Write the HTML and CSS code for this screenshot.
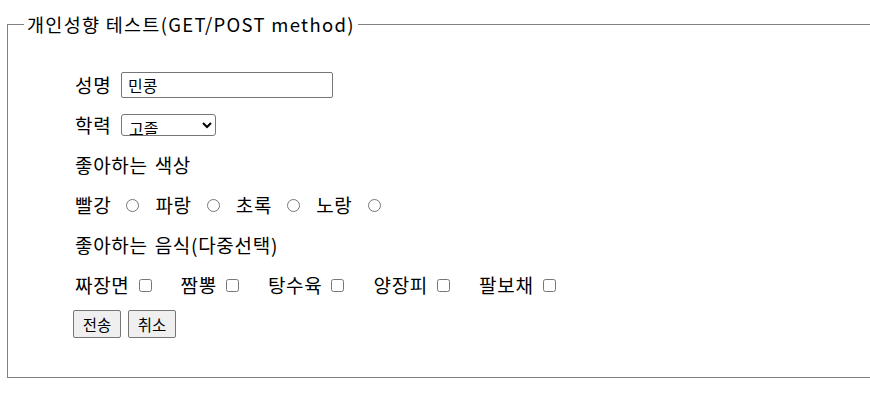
FILE: index.html
```
<!DOCTYPE html>
<html>
<head>
	<title>개인성향 테스트</title>
	<link rel="stylesheet" href="styles.css">
</head>
<body>
	<form class="survey">
		<fieldset class="survey_box">
			<legend>개인성향 테스트(GET/POST method)</legend>
			<ul class="survey_list">
				<li class="row">
					<label>성명</label>
					<input type="text" class="name_input" value="민콩">
				</li>
				<li class="row">
					<label>학력</label>
					<select class="edu_select">
						<option>고졸</option>
						<option>대졸</option>
						<option>대학원졸</option>
					</select>
				</li>
				<li class="row">좋아하는 색상</li>
				<li class="row colors">
					<span class="opt">빨강 <input type="radio" name="color"></span>
					<span class="opt">파랑 <input type="radio" name="color"></span>
					<span class="opt">초록 <input type="radio" name="color"></span>
					<span class="opt">노랑 <input type="radio" name="color"></span>
				</li>
				<li class="row">좋아하는 음식(다중선택)</li>
				<li class="row food">
					<span class="opt">짜장면 <input type="checkbox"></span>
					<span class="opt">짬뽕 <input type="checkbox"></span>
					<span class="opt">탕수육 <input type="checkbox"></span>
					<span class="opt">양장피 <input type="checkbox"></span>
					<span class="opt">팔보채 <input type="checkbox"></span>
				</li>
				<li class="row btns">
					<button type="submit">전송</button>
					<button type="reset">취소</button>
				</li>
			</ul>
		</fieldset>
	</form>
</body>
</html>
```

FILE: styles.css
```
* {
	margin: 0;
	padding: 0;
	box-sizing: border-box;
}

body {
	margin: 0;
	font-family: "Noto Sans CJK KR", "Noto Sans", sans-serif;
	font-size: 19px;
	color: #000;
	background: #fff;
}

.survey {
	padding: 12px 0 0 7px;
	width: 870px;
}

.survey_box {
	border: 1px solid #808080;
	border-right: none;
	padding: 0 12px;
	height: 366px;
}

.survey_box legend {
	margin-left: 4px;
	padding: 0 3px;
	font-size: 18.5px;
	line-height: 24px;
	letter-spacing: 1.3px;
	color: #000;
}

.survey_list {
	list-style: none;
	padding: 36px 0 0 55px;
	display: flex;
	flex-direction: column;
	gap: 14px;
}

.row {
	display: flex;
	align-items: center;
	height: 26px;
	line-height: 26px;
	letter-spacing: 0.7px;
	word-spacing: 2px;
}

.row label {
	width: 46px;
}

.name_input {
	width: 212px;
	height: 26px;
	border: 1px solid #767676;
	border-radius: 2px;
	padding: 0 6px;
	font-family: inherit;
	font-size: 16px;
	letter-spacing: 0;
	outline: none;
}

.edu_select {
	width: 95px;
	height: 22px;
	border: 1px solid #767676;
	border-radius: 3px;
	font-family: inherit;
	font-size: 16px;
	letter-spacing: 0;
	padding-left: 3px;
	background: #fff;
}

.opt {
	display: inline-flex;
	align-items: center;
}

.colors .opt {
	margin-right: 16px;
}

.colors input {
	width: 13px;
	height: 13px;
	margin: 1px 0 0 15px;
}

.food .opt {
	margin-right: 29px;
}

.food input {
	width: 13px;
	height: 13px;
	margin: 1px 0 0 9px;
}

.btns {
	margin-top: -2px;
	margin-left: -2px;
	gap: 7px;
	height: 28px;
}

.btns button {
	width: 48px;
	height: 28px;
	border: 1px solid #767676;
	border-radius: 2px;
	background: #efefef;
	font-family: inherit;
	font-size: 15.5px;
	line-height: 24px;
	letter-spacing: 0;
	color: #000;
}
```
